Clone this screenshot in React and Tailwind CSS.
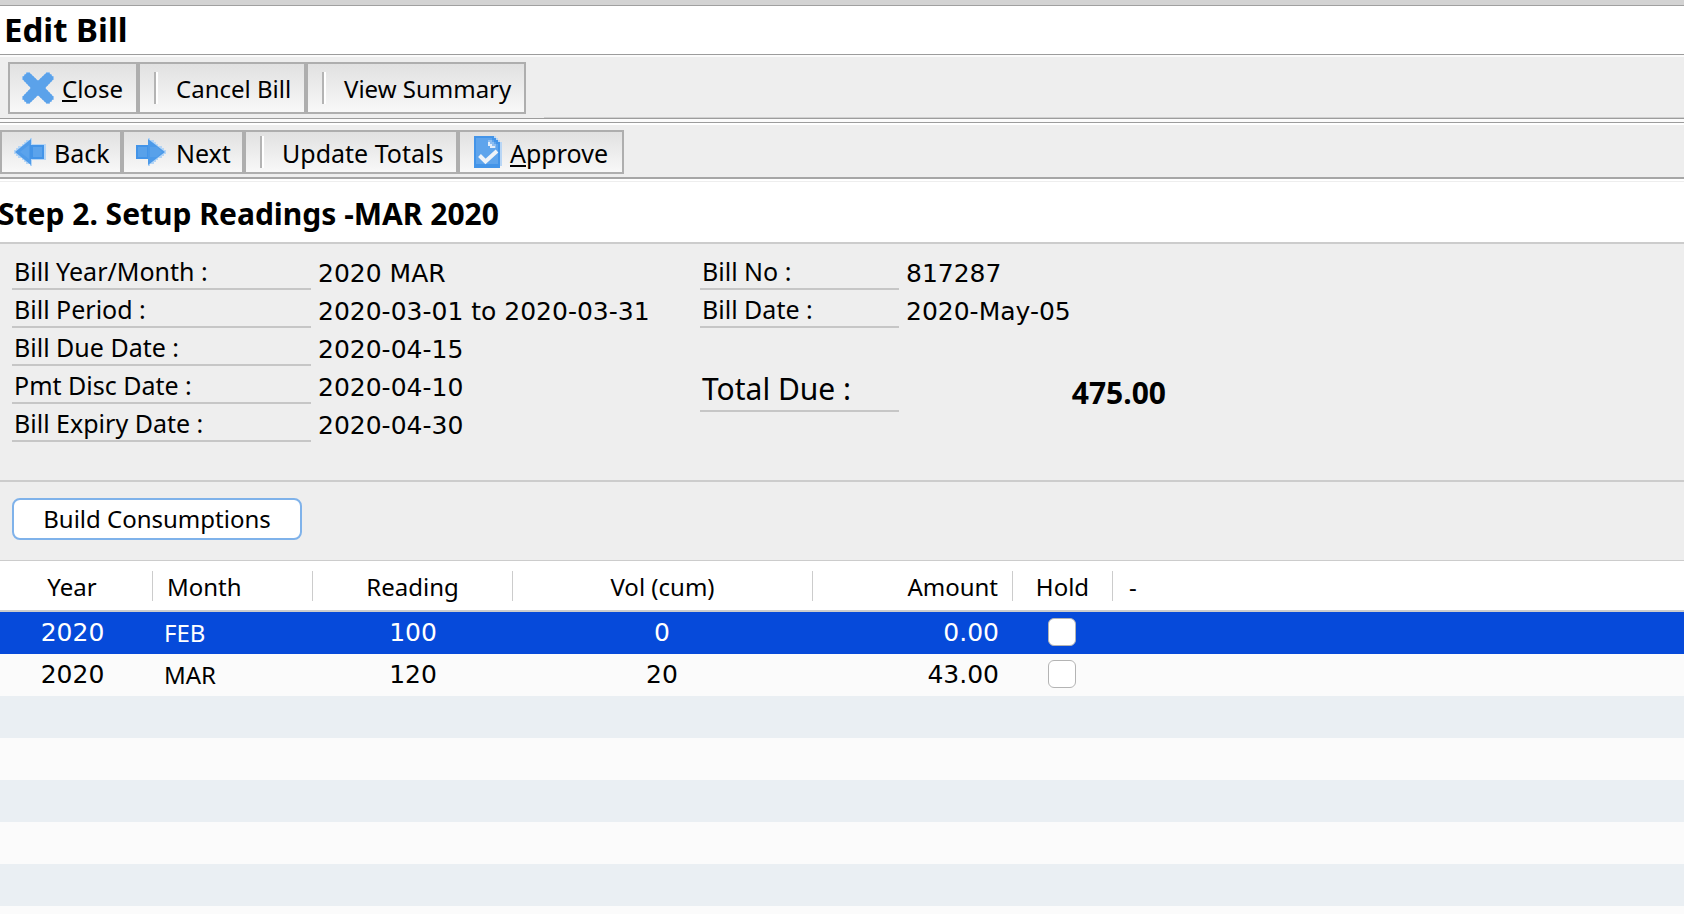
const CloseIcon = () => (
  <svg width="32" height="32" viewBox="0 0 16 16" aria-hidden="true">
    <path
      fill="#a9cdf3"
      d="M2 0H4V1H5V2H6V3H7V4H9V3H10V2H11V1H12V0H14V1H15V2H16V4H15V5H14V6H13V7H12V9H13V10H14V11H15V12H16V14H15V15H14V16H12V15H11V14H10V13H9V12H7V13H6V14H5V15H4V16H2V15H1V14H0V12H1V11H2V10H3V9H4V7H3V6H2V5H1V4H0V2H1V1H2Z"
    />
    <path
      fill="#5ba2ea"
      d="M2.500 .4H3.800L8 4.400 12.200 .4H13.500L15.600 2.500V3.800L11.600 8 15.600 12.200V13.500L13.500 15.600H12.200L8 11.600 3.800 15.600H2.500L.4 13.500V12.200L4.400 8 .4 3.800V2.500Z"
    />
  </svg>
);

const BackIcon = () => (
  <svg width="32" height="28" viewBox="0 0 32 28" aria-hidden="true">
    <path fill="#b5d5f5" d="M0 12H2V10H4V8H8V6H10V4H12V2H16V0H18V6H32V22H18V28H16V26H12V24H10V22H8V20H4V18H2V16H0Z" />
    <path fill="#4f9be9" d="M1 14 17 1v26Z" />
    <path fill="#4394e8" d="M16 7h14v14H16Z" />
    <path fill="#5ba3ec" d="M19 9h9v10h-9ZM6 14l9-7v14Z" />
  </svg>
);

const NextIcon = () => (
  <svg width="32" height="28" viewBox="0 0 32 28" aria-hidden="true">
    <path fill="#b5d5f5" d="M12 0h2v2h4v2h2v2h2v2h4v2h2v2h2v4h-2v2h-2v2h-4v2h-2v2h-2v2h-4v2h-2Z" />
    <path fill="#4394e8" d="M0 7h14v14H0Z" />
    <path fill="#58a1ea" d="M2 9h9v10H2Z" />
    <path fill="#4c9ae9" d="M12 1 29 14 12 27Z" />
    <path fill="#58a1ea" d="M14 9h7l5 5-5 5h-7Z" />
  </svg>
);

const ApproveIcon = () => (
  <svg width="28" height="32" viewBox="0 0 28 32" aria-hidden="true">
    <path fill="#b9d6f5" d="M18 0h4v2h2v2h2v2h2v24h-2v2h-4Z" />
    <path fill="#4394e8" d="M0 0h20v2h2v2h2v2h2v26H0Z" />
    <path fill="#5ea4ec" d="M2 2h16v2h2v2h2v2h2v20H2Z" />
    <path fill="#8dbdf0" d="M14 4h4v2h2v2h2v4h-6v-2h-2Z" />
    <path fill="#e3eefa" d="M14 6h2v2h2v2h3v2h-5v-2h-2Z" />
    <path fill="none" stroke="#eff3f8" strokeWidth="4" d="m5.500 19.500 6 6L23 15" />
  </svg>
);

const toolButton =
  "flex shrink-0 items-center border-2 border-[#aeaeae] bg-linear-to-b from-[#e1e1e1] to-[#f8f8f8] whitespace-nowrap";

const Divider = () => (
  <span className="h-8 w-1 shrink-0 border-l-2 border-[#b4b4b4] bg-white" aria-hidden="true" />
);

const Mnemonic = ({ children }) => (
  <span className="underline decoration-2 underline-offset-2">{children}</span>
);

const billDetails = [
  ["Bill Year/Month :", "2020 MAR"],
  ["Bill Period :", "2020-03-01 to 2020-03-31"],
  ["Bill Due Date :", "2020-04-15"],
  ["Pmt Disc Date :", "2020-04-10"],
  ["Bill Expiry Date :", "2020-04-30"],
];

const billNumbers = [
  ["Bill No :", "817287"],
  ["Bill Date :", "2020-May-05"],
];

const rows = [
  { year: "2020", month: "FEB", reading: "100", volume: "0", amount: "0.00", selected: true },
  { year: "2020", month: "MAR", reading: "120", volume: "20", amount: "43.00", selected: false },
];

const emptyRows = [0, 1, 2, 3, 4];

function DetailList({ items, className }) {
  return (
    <dl className={className}>
      {items.map(([label, value]) => (
        <div key={label} className="contents">
          <dt className="h-[38px] border-b-2 border-[#c6c6c6] pl-[2px] leading-[38px]">{label}</dt>
          <dd className="h-[38px] pt-[6px] font-['DejaVu_Sans',sans-serif] leading-8 whitespace-nowrap">
            {value}
          </dd>
        </div>
      ))}
    </dl>
  );
}

function HeaderCell({ children, className }) {
  return (
    <th scope="col" className="border-b-2 border-[#cccccc] p-0 font-normal">
      <div className={`h-[30px] leading-[32px] ${className}`}>{children}</div>
    </th>
  );
}

export default function App() {
  return (
    <main className="flex min-h-screen flex-col overflow-hidden bg-[#eeeeee] font-['Noto_Sans',sans-serif] text-[25px] text-black">
      <div className="h-[6px] border-b border-[#a0a0a0] bg-[#d3d3d3]" />
      <header className="h-[49px] border-b border-[#9c9c9c] bg-white pl-1">
        <h1 className="text-[33px] leading-[48px] font-bold">Edit Bill</h1>
      </header>

      <div className="flex h-[63px] items-start border-t-2 border-[#fbfbfb] pt-[5px] pl-2 text-2xl">
        <button type="button" className={`${toolButton} h-[52px] w-[130px] gap-2 pl-3`}>
          <CloseIcon />
          <span className="pt-[2px]">
            <Mnemonic>C</Mnemonic>lose
          </span>
        </button>
        <button type="button" className={`${toolButton} h-[52px] w-[168px] gap-[18px] pl-[14px]`}>
          <Divider />
          <span className="pt-[2px]">Cancel Bill</span>
        </button>
        <button type="button" className={`${toolButton} h-[52px] w-[220px] gap-[18px] pl-[14px]`}>
          <Divider />
          <span className="pt-[2px]">View Summary</span>
        </button>
        <span className="ml-[18px] h-px grow self-end bg-[#d0d0d0]" aria-hidden="true" />
      </div>
      <div className="h-[5px] border-y border-[#9c9c9c] bg-[#fbfbfb]" />

      <div className="flex h-[56px] items-start border-t-2 border-b-2 border-t-white border-b-[#a6a6a6] pt-[5px]">
        <button type="button" className={`${toolButton} h-[44px] w-[122px] gap-2 pl-3`}>
          <BackIcon />
          <span className="pt-1">Back</span>
        </button>
        <button type="button" className={`${toolButton} h-[44px] w-[122px] gap-2 pl-3`}>
          <NextIcon />
          <span className="pt-1">Next</span>
        </button>
        <button type="button" className={`${toolButton} h-[44px] w-[214px] gap-[18px] pl-[14px]`}>
          <Divider />
          <span className="pt-1">Update Totals</span>
        </button>
        <button type="button" className={`${toolButton} h-[44px] w-[166px] gap-2 pl-[14px]`}>
          <ApproveIcon />
          <span className="pt-1">
            <Mnemonic>A</Mnemonic>pprove
          </span>
        </button>
      </div>

      <div className="h-[3px] border-b border-[#eeeeee] bg-white" />
      <div className="h-[62px] border-b-2 border-[#cccccc] bg-white">
        <h2 className="-ml-0.5 text-[30px] leading-[64px] font-bold">Step 2. Setup Readings -MAR 2020</h2>
      </div>

      <section className="flex h-[238px] items-start border-b-2 border-[#cccccc] pt-2 pl-3">
        <DetailList
          items={billDetails}
          className="grid w-[688px] shrink-0 grid-cols-[299px_1fr] gap-x-[7px]"
        />
        <div className="w-[466px] shrink-0">
          <DetailList items={billNumbers} className="grid grid-cols-[199px_1fr] gap-x-[7px]" />
          <dl className="grid grid-cols-[199px_1fr] items-start pt-10 text-[30px]">
            <dt className="border-b-2 border-[#c6c6c6] pl-[2px] leading-[42px]">Total Due :</dt>
            <dd className="pt-1 text-right leading-[42px] font-bold">475.00</dd>
          </dl>
        </div>
      </section>

      <div className="flex h-[79px] items-start border-b border-[#cccccc] pt-4 pl-3">
        <button
          type="button"
          className="h-[42px] w-[290px] rounded-lg border-2 border-[#7fb2ea] bg-white text-2xl leading-[36px]"
        >
          Build Consumptions
        </button>
      </div>

      <div className="grow bg-[#fbfbfb]">
        <table className="w-full table-fixed border-separate border-spacing-0">
          <colgroup>
            <col className="w-[153px]" />
            <col className="w-[160px]" />
            <col className="w-[200px]" />
            <col className="w-[300px]" />
            <col className="w-[200px]" />
            <col className="w-[100px]" />
            <col />
          </colgroup>
          <thead className="text-2xl">
            <tr className="h-[51px] bg-white">
              <HeaderCell className="border-r border-[#cccccc] pr-2 text-center">Year</HeaderCell>
              <HeaderCell className="border-r border-[#cccccc] pl-[14px] text-left">Month</HeaderCell>
              <HeaderCell className="border-r border-[#cccccc] text-center">Reading</HeaderCell>
              <HeaderCell className="border-r border-[#cccccc] text-center">Vol (cum)</HeaderCell>
              <HeaderCell className="border-r border-[#cccccc] pr-[14px] text-right">Amount</HeaderCell>
              <HeaderCell className="border-r border-[#cccccc] text-center">Hold</HeaderCell>
              <HeaderCell className="pl-4 text-left">-</HeaderCell>
            </tr>
          </thead>
          <tbody className="font-['DejaVu_Sans',sans-serif] leading-8">
            {rows.map((row) => (
              <tr
                key={row.month}
                aria-selected={row.selected}
                className={`h-[42px] ${row.selected ? "bg-[#064ada] text-white" : "bg-[#fbfbfb]"}`}
              >
                <td className="p-0 pr-2 text-center">{row.year}</td>
                <td className="p-0 pl-[11px] font-['Noto_Sans',sans-serif] text-2xl leading-8">{row.month}</td>
                <td className="p-0 text-center">{row.reading}</td>
                <td className="p-0 pr-[2px] text-center">{row.volume}</td>
                <td className="p-0 pr-[14px] text-right">{row.amount}</td>
                <td className="p-0 pt-[6px] pr-[2px] align-top">
                  <input
                    type="checkbox"
                    aria-label={`Hold ${row.month} ${row.year}`}
                    className="mx-auto block size-7 appearance-none rounded-md border border-[#b4b4b4] bg-white"
                  />
                </td>
                <td className="p-0" />
              </tr>
            ))}
            {emptyRows.map((n) => (
              <tr key={n} className="h-[42px] odd:bg-[#eaeff3] even:bg-[#fbfbfb]">
                <td className="p-0" colSpan={7} />
              </tr>
            ))}
          </tbody>
        </table>
      </div>
    </main>
  );
}
